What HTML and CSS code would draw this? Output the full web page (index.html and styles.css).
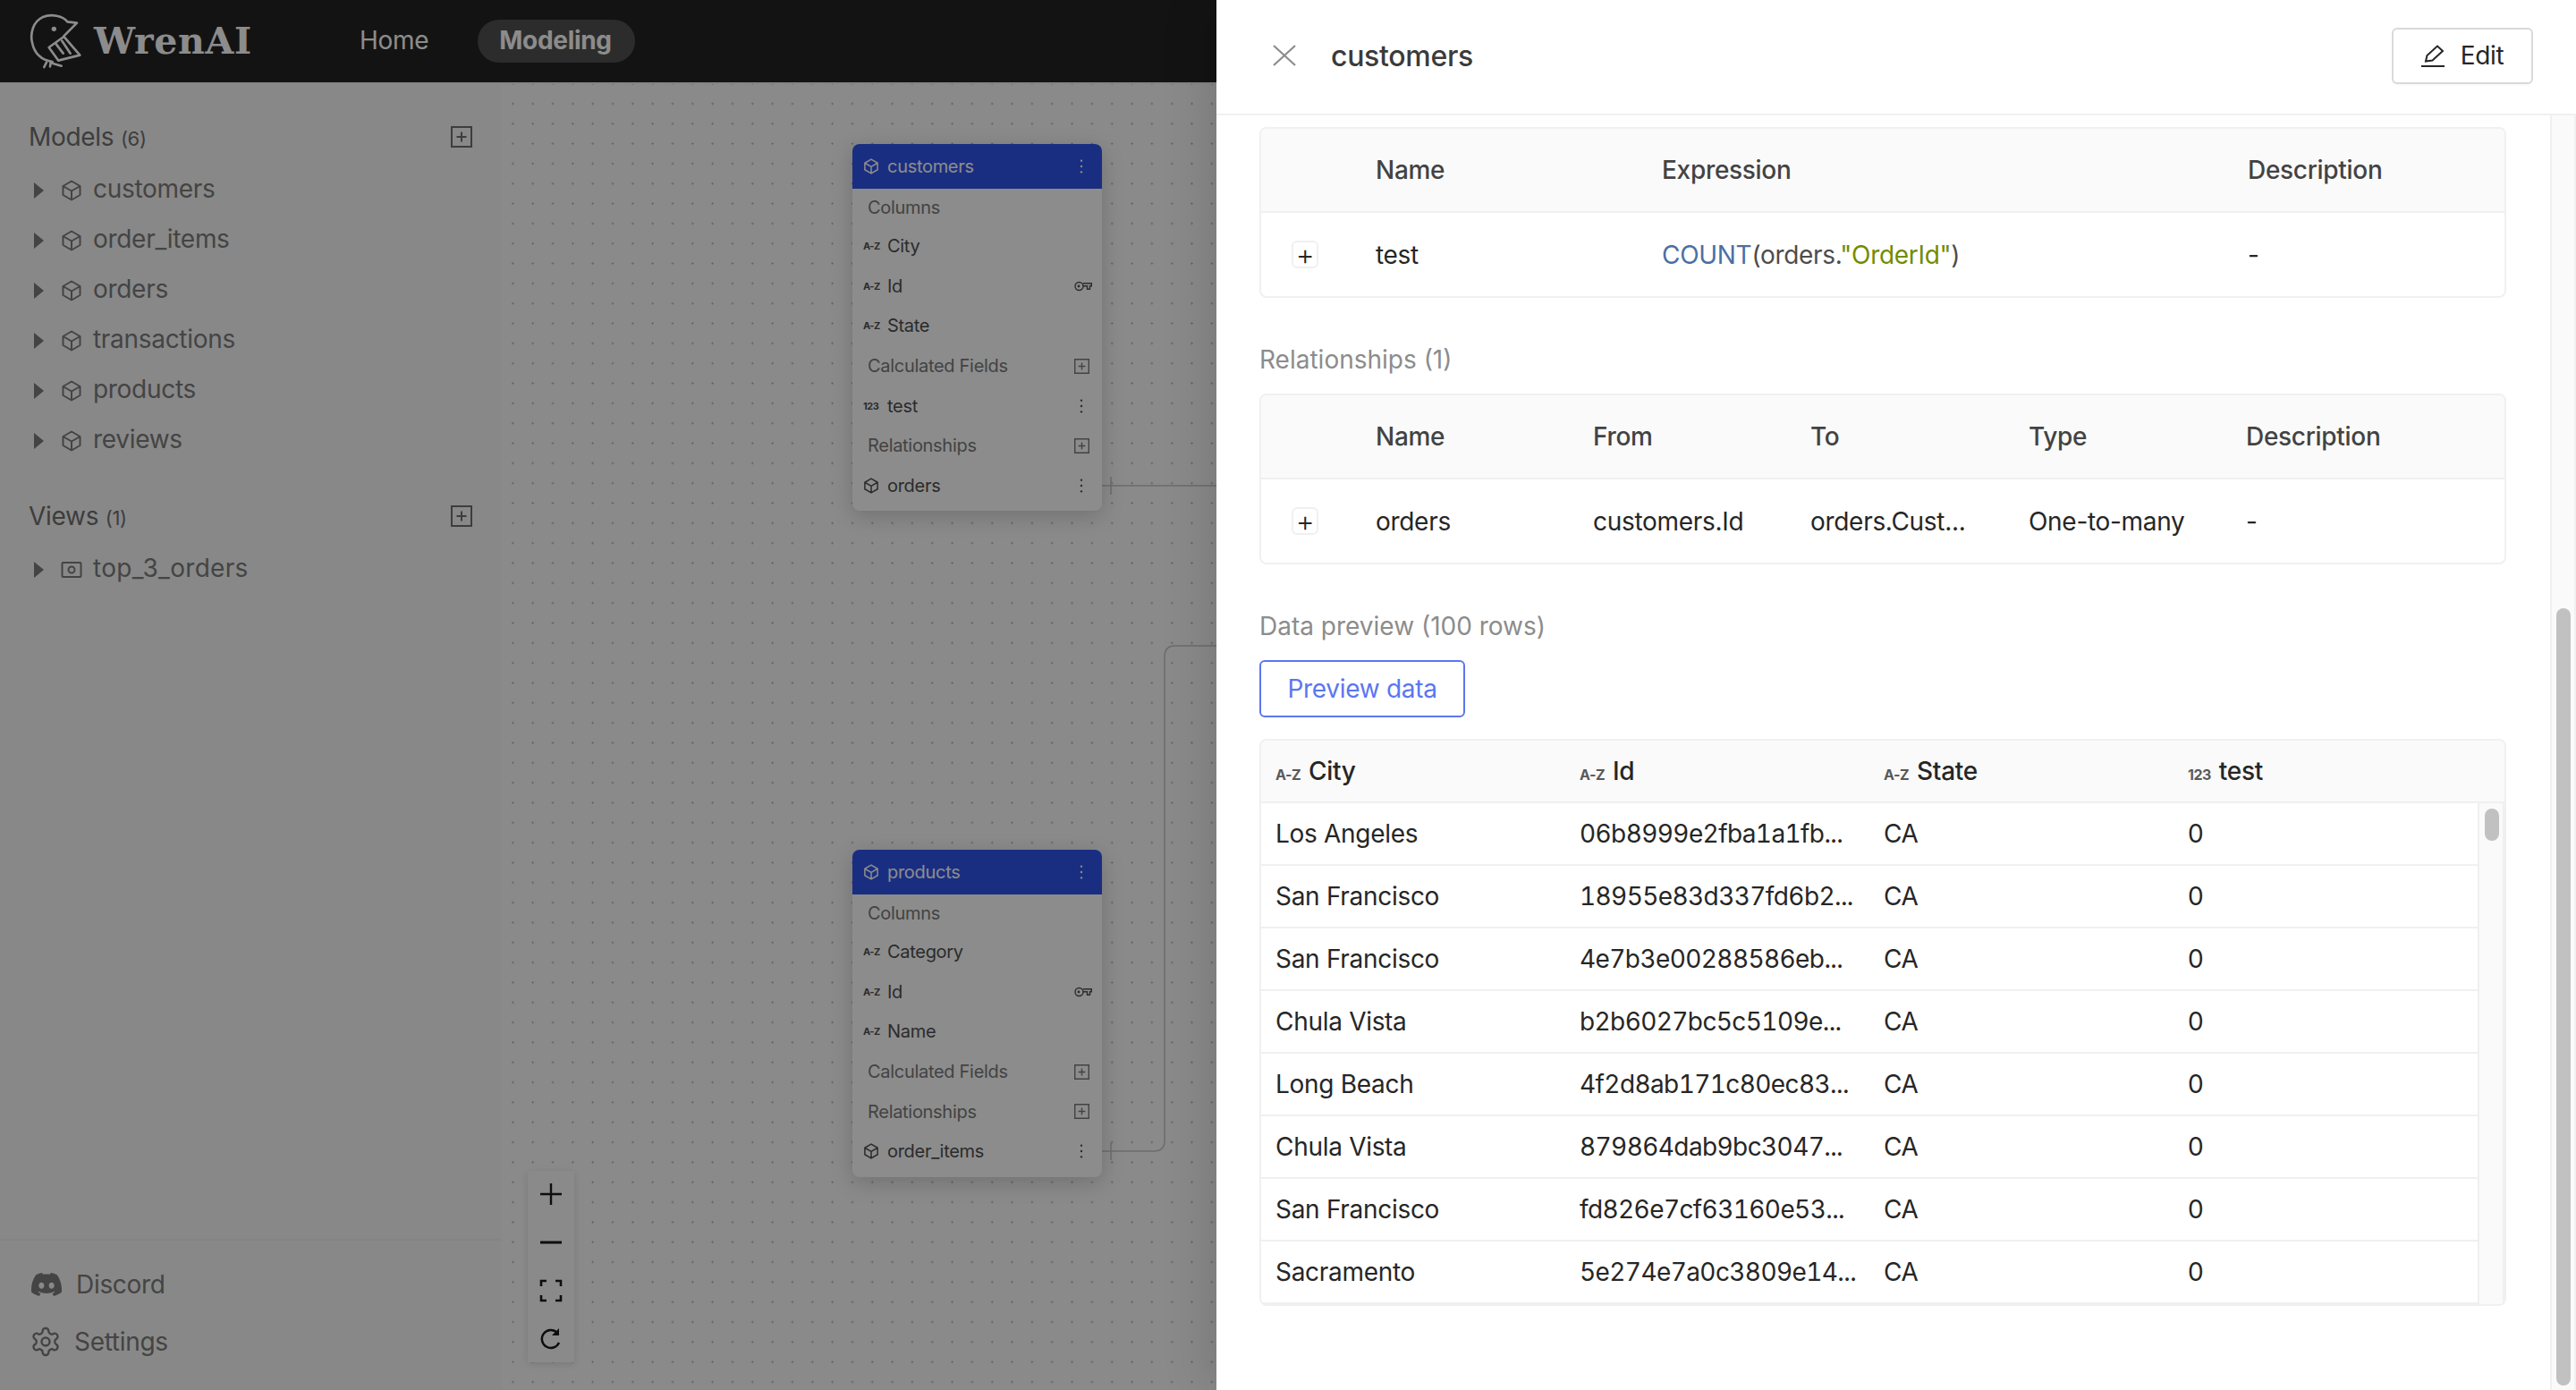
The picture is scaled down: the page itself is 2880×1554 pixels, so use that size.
FILE: index.html
```html
<!DOCTYPE html>
<html lang="en">
<head>
  <meta charset="UTF-8">
  <title>WrenAI Modeling</title>
  <link rel="stylesheet" href="styles.css">
</head>
<body>
  <svg class="icon-defs" width="0" height="0">
    <symbol id="cube" viewBox="0 0 24 24"><path d="M12 1.500 21.500 7v10L12 22.500 2.500 17V7zM2.500 7 12 12.500 21.500 7M12 12.500v10" fill="none" stroke="currentColor" stroke-width="2" stroke-linejoin="round"/></symbol>
    <symbol id="plus-box" viewBox="0 0 24 24"><path d="M1 1h22v22H1zM12 6.500v11M6.500 12h11" fill="none" stroke="currentColor" stroke-width="2"/></symbol>
    <symbol id="kebab" viewBox="0 0 4 20"><circle cx="2" cy="3" r="1.300" fill="currentColor"/><circle cx="2" cy="10" r="1.300" fill="currentColor"/><circle cx="2" cy="17" r="1.300" fill="currentColor"/></symbol>
    <symbol id="key" viewBox="0 0 20 12"><circle cx="5.500" cy="6" r="4.500" fill="none" stroke="currentColor" stroke-width="1.400"/><circle cx="5" cy="6" r="1.400" fill="currentColor"/><path d="M10 2.800h9.300v3h-1.800v3.500h-3V5.800H10" fill="none" stroke="currentColor" stroke-width="1.400"/></symbol>
  </svg>

  <div class="app">
    <header class="topbar">
      <div class="logo">
        <svg class="logo-bird" viewBox="30 20 180 186" fill="none" stroke="currentColor" stroke-width="8" stroke-linecap="round" stroke-linejoin="round">
          <path d="M148 96 192 52l-32-4C146 28 106 20 76 33 46 47 34 86 42 118c7 34 30 58 68 64"/>
          <path d="M150 100 202 160l-72 18-32-44 50-36"/>
          <path d="M120 120l26 34M142 112l28 42"/>
          <path d="M90 184l-8 16M104 184l-2 14M104 186l36 10"/>
          <circle cx="115" cy="72" r="8" fill="currentColor" stroke="none"/>
        </svg>
        <span class="logo-text">WrenAI</span>
      </div>
      <nav class="topnav">
        <a class="nav-item">Home</a>
        <a class="nav-item nav-active">Modeling</a>
      </nav>
    </header>

    <div class="workspace">
      <aside class="sidebar">
        <div class="side-head">
          <span>Models <small>(6)</small></span>
          <svg class="side-plus"><use href="#plus-box"/></svg>
        </div>
        <div class="tree-row"><i class="caret"></i><svg class="cube"><use href="#cube"/></svg>customers</div>
        <div class="tree-row"><i class="caret"></i><svg class="cube"><use href="#cube"/></svg>order_items</div>
        <div class="tree-row"><i class="caret"></i><svg class="cube"><use href="#cube"/></svg>orders</div>
        <div class="tree-row"><i class="caret"></i><svg class="cube"><use href="#cube"/></svg>transactions</div>
        <div class="tree-row"><i class="caret"></i><svg class="cube"><use href="#cube"/></svg>products</div>
        <div class="tree-row"><i class="caret"></i><svg class="cube"><use href="#cube"/></svg>reviews</div>

        <div class="side-head side-head-views">
          <span>Views <small>(1)</small></span>
          <svg class="side-plus"><use href="#plus-box"/></svg>
        </div>
        <div class="tree-row">
          <i class="caret"></i>
          <svg class="cube" viewBox="0 0 24 24" fill="none" stroke="currentColor" stroke-width="2"><rect x="1.500" y="4" width="21" height="16" rx="1"/><circle cx="12" cy="12" r="3.500"/></svg>
          <span class="view-name">top_3_orders</span>
        </div>

        <div class="side-foot">
          <a class="foot-link">
            <svg class="foot-discord" viewBox="0 0 24 24" fill="currentColor"><path d="M20.317 4.3698a19.7913 19.7913 0 00-4.8851-1.5152.0741.0741 0 00-.0785.0371c-.211.3753-.4447.8648-.6083 1.2495-1.8447-.2762-3.68-.2762-5.4868 0-.1636-.3933-.4058-.8742-.6177-1.2495a.077.077 0 00-.0785-.037 19.7363 19.7363 0 00-4.8852 1.515.0699.0699 0 00-.0321.0277C.5334 9.0458-.319 13.5799.0992 18.0578a.0824.0824 0 00.0312.0561c2.0528 1.5076 4.0413 2.4228 5.9929 3.0294a.0777.0777 0 00.0842-.0276c.4616-.6304.8731-1.2952 1.226-1.9942a.076.076 0 00-.0416-.1057c-.6528-.2476-1.2743-.5495-1.8722-.8923a.077.077 0 01-.0076-.1277c.1258-.0943.2517-.1923.3718-.2914a.0743.0743 0 01.0776-.0105c3.9278 1.7933 8.18 1.7933 12.0614 0a.0739.0739 0 01.0785.0095c.1202.099.246.1981.3728.2924a.077.077 0 01-.0066.1276 12.2986 12.2986 0 01-1.873.8914.0766.0766 0 00-.0407.1067c.3604.698.7719 1.3628 1.225 1.9932a.076.076 0 00.0842.0286c1.961-.6067 3.9495-1.5219 6.0023-3.0294a.077.077 0 00.0313-.0552c.5004-5.177-.8382-9.6739-3.5485-13.6604a.061.061 0 00-.0312-.0286zM8.02 15.3312c-1.1825 0-2.1569-1.0857-2.1569-2.419 0-1.3332.9555-2.4189 2.157-2.4189 1.2108 0 2.1757 1.0952 2.1568 2.419 0 1.3332-.9555 2.4189-2.1569 2.4189zm7.9748 0c-1.1825 0-2.1569-1.0857-2.1569-2.419 0-1.3332.9554-2.4189 2.1569-2.4189 1.2108 0 2.1757 1.0952 2.1568 2.419 0 1.3332-.946 2.4189-2.1568 2.4189Z"/></svg>
            Discord
          </a>
          <a class="foot-link">
            <svg class="foot-gear" viewBox="0 0 24 24" fill="none" stroke="currentColor" stroke-width="1.600"><path d="M12.22 2h-.44a2 2 0 0 0-2 2v.18a2 2 0 0 1-1 1.730l-.43.25a2 2 0 0 1-2 0l-.15-.08a2 2 0 0 0-2.730.73l-.22.38a2 2 0 0 0 .73 2.730l.15.1a2 2 0 0 1 1 1.720v.51a2 2 0 0 1-1 1.740l-.15.09a2 2 0 0 0-.73 2.730l.22.38a2 2 0 0 0 2.730.73l.15-.08a2 2 0 0 1 2 0l.43.25a2 2 0 0 1 1 1.730V20a2 2 0 0 0 2 2h.44a2 2 0 0 0 2-2v-.18a2 2 0 0 1 1-1.730l.43-.25a2 2 0 0 1 2 0l.15.08a2 2 0 0 0 2.730-.73l.22-.39a2 2 0 0 0-.73-2.730l-.15-.08a2 2 0 0 1-1-1.740v-.5a2 2 0 0 1 1-1.740l.15-.09a2 2 0 0 0 .73-2.730l-.22-.38a2 2 0 0 0-2.730-.73l-.15.08a2 2 0 0 1-2 0l-.43-.25a2 2 0 0 1-1-1.730V4a2 2 0 0 0-2-2z"/><circle cx="12" cy="12" r="3"/></svg>
            Settings
          </a>
        </div>
      </aside>

      <main class="canvas">
        <svg class="edges" width="800" height="1460" fill="none" stroke="#c4c4c4" stroke-width="1.500">
          <!-- coordinates relative to the canvas: x - 560, y - 94 -->
          <path d="M672 449H800M682 439v20"/>
          <path d="M672 1193H730q12 0 12-12V640q0-12 12-12H800M682 1183v20"/>
        </svg>

        <section class="node node-customers">
          <div class="node-head"><svg class="node-icon"><use href="#cube"/></svg><span>customers</span><svg class="node-kebab"><use href="#kebab"/></svg></div>
          <div class="node-label">Columns</div>
          <div class="node-row"><b class="type">A-Z</b><span>City</span></div>
          <div class="node-row"><b class="type">A-Z</b><span>Id</span><svg class="node-key"><use href="#key"/></svg></div>
          <div class="node-row"><b class="type">A-Z</b><span>State</span></div>
          <div class="node-label">Calculated Fields<svg class="node-plus"><use href="#plus-box"/></svg></div>
          <div class="node-row"><b class="type">123</b><span>test</span><svg class="node-kebab"><use href="#kebab"/></svg></div>
          <div class="node-label">Relationships<svg class="node-plus"><use href="#plus-box"/></svg></div>
          <div class="node-row"><svg class="node-icon"><use href="#cube"/></svg><span>orders</span><svg class="node-kebab"><use href="#kebab"/></svg></div>
        </section>

        <section class="node node-products">
          <div class="node-head"><svg class="node-icon"><use href="#cube"/></svg><span>products</span><svg class="node-kebab"><use href="#kebab"/></svg></div>
          <div class="node-label">Columns</div>
          <div class="node-row"><b class="type">A-Z</b><span>Category</span></div>
          <div class="node-row"><b class="type">A-Z</b><span>Id</span><svg class="node-key"><use href="#key"/></svg></div>
          <div class="node-row"><b class="type">A-Z</b><span>Name</span></div>
          <div class="node-label">Calculated Fields<svg class="node-plus"><use href="#plus-box"/></svg></div>
          <div class="node-label">Relationships<svg class="node-plus"><use href="#plus-box"/></svg></div>
          <div class="node-row"><svg class="node-icon"><use href="#cube"/></svg><span>order_items</span><svg class="node-kebab"><use href="#kebab"/></svg></div>
        </section>

        <div class="controls">
          <button class="ctrl"><svg viewBox="0 0 26 26" fill="none" stroke="currentColor" stroke-width="2.400"><path d="M13 1v24M1 13h24"/></svg></button>
          <button class="ctrl"><svg viewBox="0 0 26 26" fill="none" stroke="currentColor" stroke-width="3"><path d="M1 13h24"/></svg></button>
          <button class="ctrl"><svg viewBox="0 0 26 26" fill="none" stroke="currentColor" stroke-width="2.600"><path d="M2 8V2h6M18 2h6v6M24 18v6h-6M8 24H2v-6"/></svg></button>
          <button class="ctrl"><svg viewBox="0 0 26 26" fill="none" stroke="currentColor" stroke-width="2.400"><path d="M22 17a10 10 0 1 1-2-11"/><path d="M22 1v8h-8z" fill="currentColor" stroke="none"/></svg></button>
        </div>
      </main>
    </div>
  </div>

  <div class="mask"></div>

  <aside class="drawer">
    <div class="drawer-head">
      <svg class="drawer-close" viewBox="0 0 26 24" fill="none" stroke="currentColor" stroke-width="2.200"><path d="M1 1l24 22M25 1 1 23"/></svg>
      <span class="drawer-title">customers</span>
      <button class="edit-btn">
        <svg viewBox="0 0 26 25" fill="none" stroke="currentColor" stroke-width="2"><path d="M0 24h26M5 18.500 6.500 12 18 1.500 24 7 12.500 17.500z"/></svg>
        Edit
      </button>
    </div>

    <div class="drawer-scroll">
      <div class="drawer-body">
        <div class="card">
          <div class="row row-head cols-calc">
            <div></div><div>Name</div><div>Expression</div><div>Description</div>
          </div>
          <div class="row cols-calc">
            <div><span class="expand">+</span></div>
            <div>test</div>
            <div><span class="sql-fn">COUNT</span><span class="sql-plain">(orders.</span><span class="sql-str">"OrderId"</span><span class="sql-plain">)</span></div>
            <div>-</div>
          </div>
        </div>

        <h3 class="section-title">Relationships (1)</h3>
        <div class="card">
          <div class="row row-head cols-rel">
            <div></div><div>Name</div><div>From</div><div>To</div><div>Type</div><div>Description</div>
          </div>
          <div class="row cols-rel">
            <div><span class="expand">+</span></div>
            <div>orders</div><div>customers.Id</div><div>orders.Cust...</div><div>One-to-many</div><div>-</div>
          </div>
        </div>

        <h3 class="section-title">Data preview (100 rows)</h3>
        <button class="preview-btn">Preview data</button>

        <div class="card preview-card">
          <div class="preview-head cols-data">
            <div><b class="type type-lg">A-Z</b>City</div>
            <div><b class="type type-lg">A-Z</b>Id</div>
            <div><b class="type type-lg">A-Z</b>State</div>
            <div><b class="type type-lg">123</b>test</div>
          </div>
          <div class="preview-body">
            <div class="preview-rows">
              <div class="cols-data data-row"><div>Los Angeles</div><div class="hash">06b8999e2fba1a1fb...</div><div>CA</div><div>0</div></div>
              <div class="cols-data data-row"><div>San Francisco</div><div class="hash">18955e83d337fd6b2...</div><div>CA</div><div>0</div></div>
              <div class="cols-data data-row"><div>San Francisco</div><div class="hash">4e7b3e00288586eb...</div><div>CA</div><div>0</div></div>
              <div class="cols-data data-row"><div>Chula Vista</div><div class="hash">b2b6027bc5c5109e...</div><div>CA</div><div>0</div></div>
              <div class="cols-data data-row"><div>Long Beach</div><div class="hash">4f2d8ab171c80ec83...</div><div>CA</div><div>0</div></div>
              <div class="cols-data data-row"><div>Chula Vista</div><div class="hash">879864dab9bc3047...</div><div>CA</div><div>0</div></div>
              <div class="cols-data data-row"><div>San Francisco</div><div class="hash">fd826e7cf63160e53...</div><div>CA</div><div>0</div></div>
              <div class="cols-data data-row"><div>Sacramento</div><div class="hash">5e274e7a0c3809e14...</div><div>CA</div><div>0</div></div>
            </div>
            <div class="inner-track"><div class="inner-thumb"></div></div>
          </div>
        </div>
      </div>
      <div class="outer-track"><div class="outer-thumb"></div></div>
    </div>
  </aside>
</body>
</html>
```

FILE: styles.css
```css
* {
  box-sizing: border-box;
}
body {
  margin: 0;
  width: 2880px;
  height: 1554px;
  overflow: hidden;
  position: relative;
  font-family: Inter, "Noto Sans", sans-serif;
  font-size: 28px;
  letter-spacing: -0.3px;
  color: #262626;
  background-color: #fff;
}
.icon-defs {
  position: absolute;
}
.app {
  display: flex;
  flex-direction: column;
  height: 1554px;
}

/* top bar */
.topbar {
  display: flex;
  align-items: center;
  height: 94px;
  flex: none;
  background-color: #242424;
  border-bottom: 2px solid #f0f0f0;
  color: #fff;
}
.logo {
  display: flex;
  align-items: center;
  width: 378px;
  padding-left: 32px;
}
.logo-bird {
  width: 60px;
  height: 62px;
  margin-right: 13px;
}
.logo-text {
  font-family: "DejaVu Serif", serif;
  font-weight: 700;
  font-size: 41px;
  letter-spacing: 0.7px;
}
.topnav {
  display: flex;
  gap: 31px;
}
.nav-item {
  height: 48px;
  line-height: 47px;
  padding: 0 24px;
  border-radius: 24px;
  font-size: 28px;
}
.nav-active {
  padding-right: 26px;
  font-weight: 700;
  background-color: #505050;
}

/* left sidebar */
.workspace {
  display: flex;
  flex: 1;
}
.sidebar {
  display: flex;
  flex-direction: column;
  width: 560px;
  flex: none;
  padding-top: 37px;
  background-color: #f8f8f8;
  color: #7c7c7c;
}
.side-head {
  display: flex;
  align-items: center;
  justify-content: space-between;
  height: 44px;
  margin-bottom: 8px;
  padding: 0 32px;
  color: #707070;
}
.side-head small {
  font-size: 22px;
}
.side-head-views {
  margin-top: 36px;
}
.side-plus {
  width: 24px;
  height: 24px;
}
.tree-row {
  display: flex;
  align-items: center;
  height: 56px;
  padding-left: 38px;
}
.view-name {
  letter-spacing: 0.3px;
}
.caret {
  width: 0;
  height: 0;
  margin-top: 3px;
  margin-right: 19px;
  border-left: 11px solid #7c7c7c;
  border-top: 9px solid transparent;
  border-bottom: 9px solid transparent;
}
.cube {
  width: 24px;
  height: 24px;
  margin-top: 3px;
  margin-right: 12px;
}
.side-foot {
  margin-top: auto;
  padding: 17px 0 22px;
  border-top: 2px solid #f0f0f0;
}
.foot-link {
  display: flex;
  align-items: center;
  height: 64px;
  padding-left: 35px;
}
.foot-discord {
  width: 34px;
  height: 34px;
  margin-right: 16px;
}
.foot-gear {
  width: 36px;
  height: 36px;
  margin-left: -2px;
  margin-right: 14px;
}

/* diagram canvas */
.canvas {
  position: relative;
  flex: 1;
  background-color: #fbfbfb;
  background-image: radial-gradient(circle, #b4b4b4 0.9px, transparent 1.2px);
  background-size: 22.33px 22.33px;
  background-position: 2.2px 10.8px;
}
.edges {
  position: absolute;
  left: 0;
  top: 0;
}
.node {
  position: absolute;
  width: 279px;
  padding-bottom: 6px;
  background-color: #fff;
  border-radius: 8px;
  font-size: 20px;
  box-shadow: 0 6px 24px rgba(0, 0, 0, 0.18);
  overflow: hidden;
}
.node-customers {
  left: 393px;
  top: 67px;
}
.node-products {
  left: 393px;
  top: 856px;
}
.node-head {
  display: flex;
  align-items: center;
  height: 50px;
  padding: 0 21px 0 12px;
  background-color: #2f54eb;
  color: #fff;
}
.node-icon {
  width: 18px;
  height: 18px;
  margin-right: 9px;
  flex: none;
}
.node-kebab {
  width: 4px;
  height: 18px;
  margin-left: auto;
  flex: none;
}
.node-label,
.node-row {
  display: flex;
  align-items: center;
  height: 44.6px;
}
.node-head + .node-label {
  height: 42px;
}
.node-label {
  padding: 0 14px 0 17px;
  color: #7a7a7a;
}
.node-row {
  padding: 0 21px 0 12px;
  color: #4f4f4f;
}
.node-key {
  width: 20px;
  height: 12px;
  margin-left: auto;
  margin-right: -10px;
}
.node-plus {
  width: 17px;
  height: 17px;
  margin-left: auto;
}
.type {
  width: 18px;
  margin-right: 9px;
  flex: none;
  font-size: 11px;
  font-weight: 700;
  letter-spacing: -0.5px;
  white-space: nowrap;
}
.controls {
  position: absolute;
  left: 30px;
  top: 1215px;
  display: flex;
  flex-direction: column;
  gap: 2px;
  box-shadow: 0 2px 8px rgba(0, 0, 0, 0.12);
}
.ctrl {
  display: flex;
  align-items: center;
  justify-content: center;
  width: 52px;
  height: 52px;
  padding: 0;
  border: 0;
  background-color: #fbfbfb;
  color: #1a1a1a;
}
.ctrl svg {
  width: 26px;
  height: 26px;
}

/* dim layer under the drawer */
.mask {
  position: absolute;
  inset: 0;
  background-color: rgba(0, 0, 0, 0.45);
}

/* metadata drawer */
.drawer {
  position: absolute;
  top: 0;
  right: 0;
  bottom: 0;
  width: 1520px;
  display: flex;
  flex-direction: column;
  background-color: #fff;
  box-shadow: -12px 0 48px rgba(0, 0, 0, 0.12);
}
.drawer-head {
  display: flex;
  align-items: center;
  flex: none;
  height: 129px;
  padding: 0 48px 3px 63px;
  border-bottom: 2px solid #f0f0f0;
}
.drawer-close {
  width: 26px;
  height: 24px;
  margin-right: 39px;
  color: #8c8c8c;
}
.drawer-title {
  font-size: 32px;
  font-weight: 500;
  color: #3b3b3b;
}
.edit-btn {
  display: flex;
  align-items: center;
  justify-content: center;
  gap: 18px;
  width: 158px;
  height: 63px;
  margin-left: auto;
  border: 2px solid #d9d9d9;
  border-radius: 6px;
  background-color: #fff;
  font-family: inherit;
  font-size: 28px;
  letter-spacing: inherit;
  color: #262626;
  box-shadow: 0 2px 0 rgba(0, 0, 0, 0.02);
}
.edit-btn svg {
  width: 26px;
  height: 25px;
}
.drawer-scroll {
  display: flex;
  flex: 1;
  min-height: 0;
}
.drawer-body {
  flex: 1;
  padding: 13px 49px 0 48px;
}
.outer-track {
  width: 29px;
  flex: none;
  padding: 551px 5px 0;
  background-color: #fafafa;
  border-left: 2px solid #f0f0f0;
  border-right: 2px solid #f0f0f0;
}
.outer-thumb {
  width: 16px;
  height: 869px;
  border-radius: 8px;
  background-color: #c1c1c1;
}
.card {
  border: 2px solid #f0f0f0;
  border-radius: 8px;
  overflow: hidden;
}
.row {
  display: grid;
  align-items: center;
  height: 93px;
}
.row > div {
  padding-left: 16px;
  white-space: nowrap;
}
.row-head {
  height: 94px;
  border-bottom: 2px solid #f0f0f0;
  background-color: #fafafa;
  font-weight: 500;
  color: #434343;
}
.cols-calc {
  grid-template-columns: 112px 320px 655px 1fr;
}
.cols-rel {
  grid-template-columns: 112px 243px 243px 244px 243px 1fr;
}
.expand {
  display: flex;
  align-items: center;
  justify-content: center;
  width: 30px;
  height: 31px;
  margin-left: 18px;
  border: 2px solid #f0f0f0;
  border-radius: 6px;
  font-size: 32px;
  font-weight: 300;
  line-height: 1;
}
.sql-fn {
  color: #4a6fa5;
}
.sql-plain {
  color: #4d4d4c;
}
.sql-str {
  color: #718c00;
}
.section-title {
  margin: 47px 0 16px;
  height: 44px;
  line-height: 44px;
  font-size: 28px;
  font-weight: 400;
  letter-spacing: 0;
  color: #8c8c8c;
}
.preview-btn {
  display: block;
  width: 230px;
  height: 64px;
  margin-bottom: 24px;
  border: 2px solid #5b76f0;
  border-radius: 6px;
  background-color: #fff;
  font-family: inherit;
  font-size: 28px;
  letter-spacing: inherit;
  color: #5b76f0;
}
.preview-head {
  height: 70px;
  align-items: center;
  border-bottom: 2px solid #f0f0f0;
  background-color: #fafafa;
  font-weight: 500;
}
.cols-data {
  display: grid;
  grid-template-columns: 340px 340px 340px 340px;
}
.cols-data > div {
  padding-left: 16px;
  white-space: nowrap;
}
.hash {
  font-variant-numeric: tabular-nums;
  letter-spacing: -0.6px;
}
.type-lg {
  display: inline-block;
  width: auto;
  margin-right: 9px;
  font-size: 16px;
  color: #595959;
}
.preview-body {
  display: flex;
}
.preview-rows {
  width: 1360px;
  flex: none;
}
.data-row {
  height: 70px;
  align-items: center;
  border-bottom: 2px solid #f0f0f0;
}
.inner-track {
  flex: 1;
  padding: 6px 0 0 6px;
  background-color: #fafafa;
  border-left: 2px solid #f0f0f0;
  border-right: 2px solid #f0f0f0;
}
.inner-thumb {
  width: 16px;
  height: 36px;
  border-radius: 8px;
  background-color: #c1c1c1;
}
```
